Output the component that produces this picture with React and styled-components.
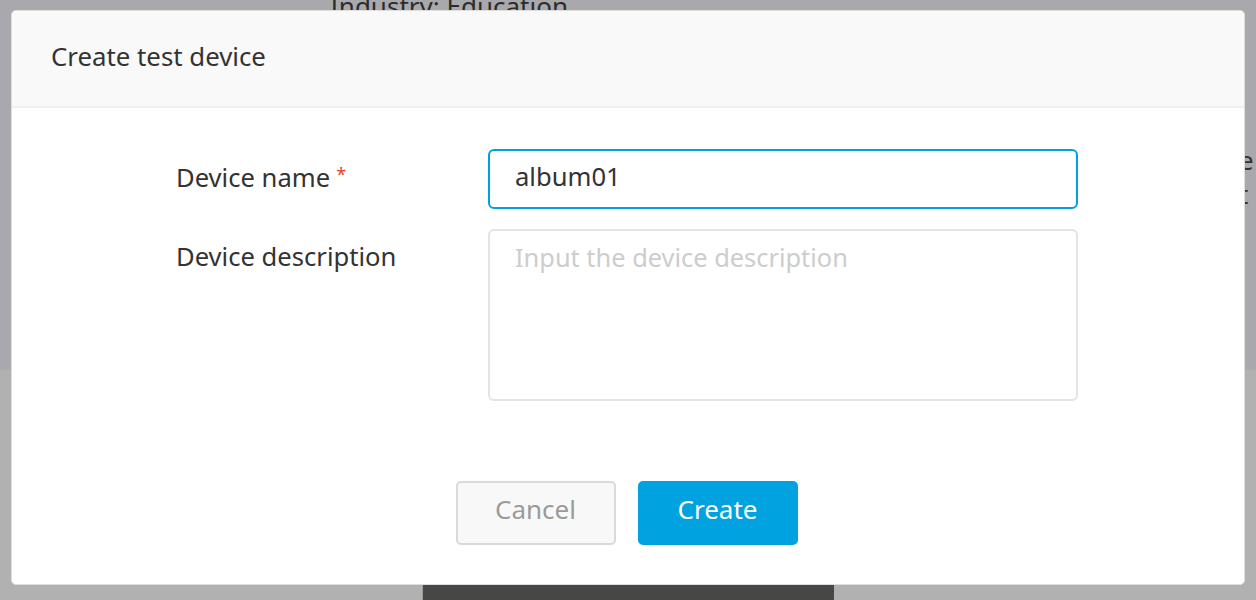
import React from "react";
import styled, { createGlobalStyle } from "styled-components";

const Global = createGlobalStyle`
  html, body { margin: 0; padding: 0; }
  body {
    width: 1256px; height: 600px; overflow: hidden;
    font-family: "Noto Sans", "Open Sans", sans-serif;
    background: #b1b1b1;
  }
  * { box-sizing: border-box; }
`;

const Page = styled.div`
  position: relative;
  width: 1256px;
  height: 600px;
  overflow: hidden;
  display: flex;
  flex-direction: column;
`;

const BgTop = styled.div`
  height: 370px;
  background: #a9a9ad;
  display: flex;
  flex-direction: column;
`;

const BgHeadline = styled.div`
  padding-left: 330px;
  margin-top: -12px;
  font-size: 26px;
  color: #2c2c2c;
  white-space: nowrap;
`;

const BgBottom = styled.div`
  flex: 1;
  background: #b1b1b1;
  display: flex;
  align-items: flex-end;
  padding-left: 422px;
`;

const DarkBar = styled.div`
  width: 412px;
  height: 15px;
  background: #474745;
  border-left: 1px solid #9a9a9a;
`;

const SideText = styled.div`
  position: absolute;
  left: 1239px;
  top: ${(p) => p.$top}px;
  font-size: 26px;
  color: #333;
`;

const Overlay = styled.div`
  position: absolute;
  inset: 0;
  padding: 10px 11px;
`;

const Modal = styled.div`
  width: 1234px;
  height: 575px;
  background: #fff;
  border: 1px solid #dedede;
  border-radius: 5px;
  overflow: hidden;
  display: flex;
  flex-direction: column;
`;

const Header = styled.div`
  height: 97px;
  background: #f9f9f9;
  border-bottom: 2px solid #eef1f4;
  display: flex;
  align-items: center;
  padding: 0 0 6px 39px;
  font-size: 25.8px;
  color: #333;
`;

const Body = styled.div`
  flex: 1;
  display: flex;
  flex-direction: column;
  padding: 41px 0 0 164px;
`;

const Form = styled.div`
  display: grid;
  grid-template-columns: 312px 590px;
  row-gap: 20px;
`;

const Label = styled.div`
  font-size: 25.6px;
  color: #333;
  padding-top: ${(p) => p.$pt}px;
  line-height: 32px;
`;

const Star = styled.span`
  color: #e8412c;
  font-size: 18px;
  vertical-align: top;
  margin-left: 6px;
  position: relative;
  top: -4px;
`;

const Input = styled.div`
  height: 60px;
  border: 2px solid #00a0de;
  border-radius: 6px;
  display: flex;
  align-items: center;
  padding: 0 0 5px 25px;
  font-size: 25.6px;
  color: #333;
`;

const TextArea = styled.div`
  height: 172px;
  border: 2px solid #e4e4e4;
  border-radius: 6px;
  padding: 10px 0 0 25px;
  font-size: 25.4px;
  line-height: 32px;
  color: #cdcdcd;
`;

const Footer = styled.div`
  display: flex;
  justify-content: center;
  gap: 22px;
  margin-top: 80px;
  margin-left: -167px;
`;

const Button = styled.div`
  width: 160px;
  height: 64px;
  border-radius: 5px;
  display: flex;
  align-items: center;
  justify-content: center;
  padding-bottom: 8px;
  font-size: 26px;
  background: ${(p) => (p.$primary ? "#00a3e0" : "#f8f8f8")};
  color: ${(p) => (p.$primary ? "#fff" : "#9b9b9b")};
  border: 2px solid ${(p) => (p.$primary ? "#00a3e0" : "#dadada")};
`;

export default function App() {
  return (
    <>
      <Global />
      <Page>
        <BgTop>
          <BgHeadline>Industry: Education</BgHeadline>
        </BgTop>
        <BgBottom>
          <DarkBar />
        </BgBottom>
        <SideText $top={142}>e</SideText>
        <SideText $top={176}>t</SideText>
        <Overlay>
          <Modal>
            <Header>Create test device</Header>
            <Body>
              <Form>
                <Label $pt={13}>
                  Device name<Star>*</Star>
                </Label>
                <Input>album01</Input>
                <Label $pt={12}>Device description</Label>
                <TextArea>Input the device description</TextArea>
              </Form>
              <Footer>
                <Button>Cancel</Button>
                <Button $primary>Create</Button>
              </Footer>
            </Body>
          </Modal>
        </Overlay>
      </Page>
    </>
  );
}
